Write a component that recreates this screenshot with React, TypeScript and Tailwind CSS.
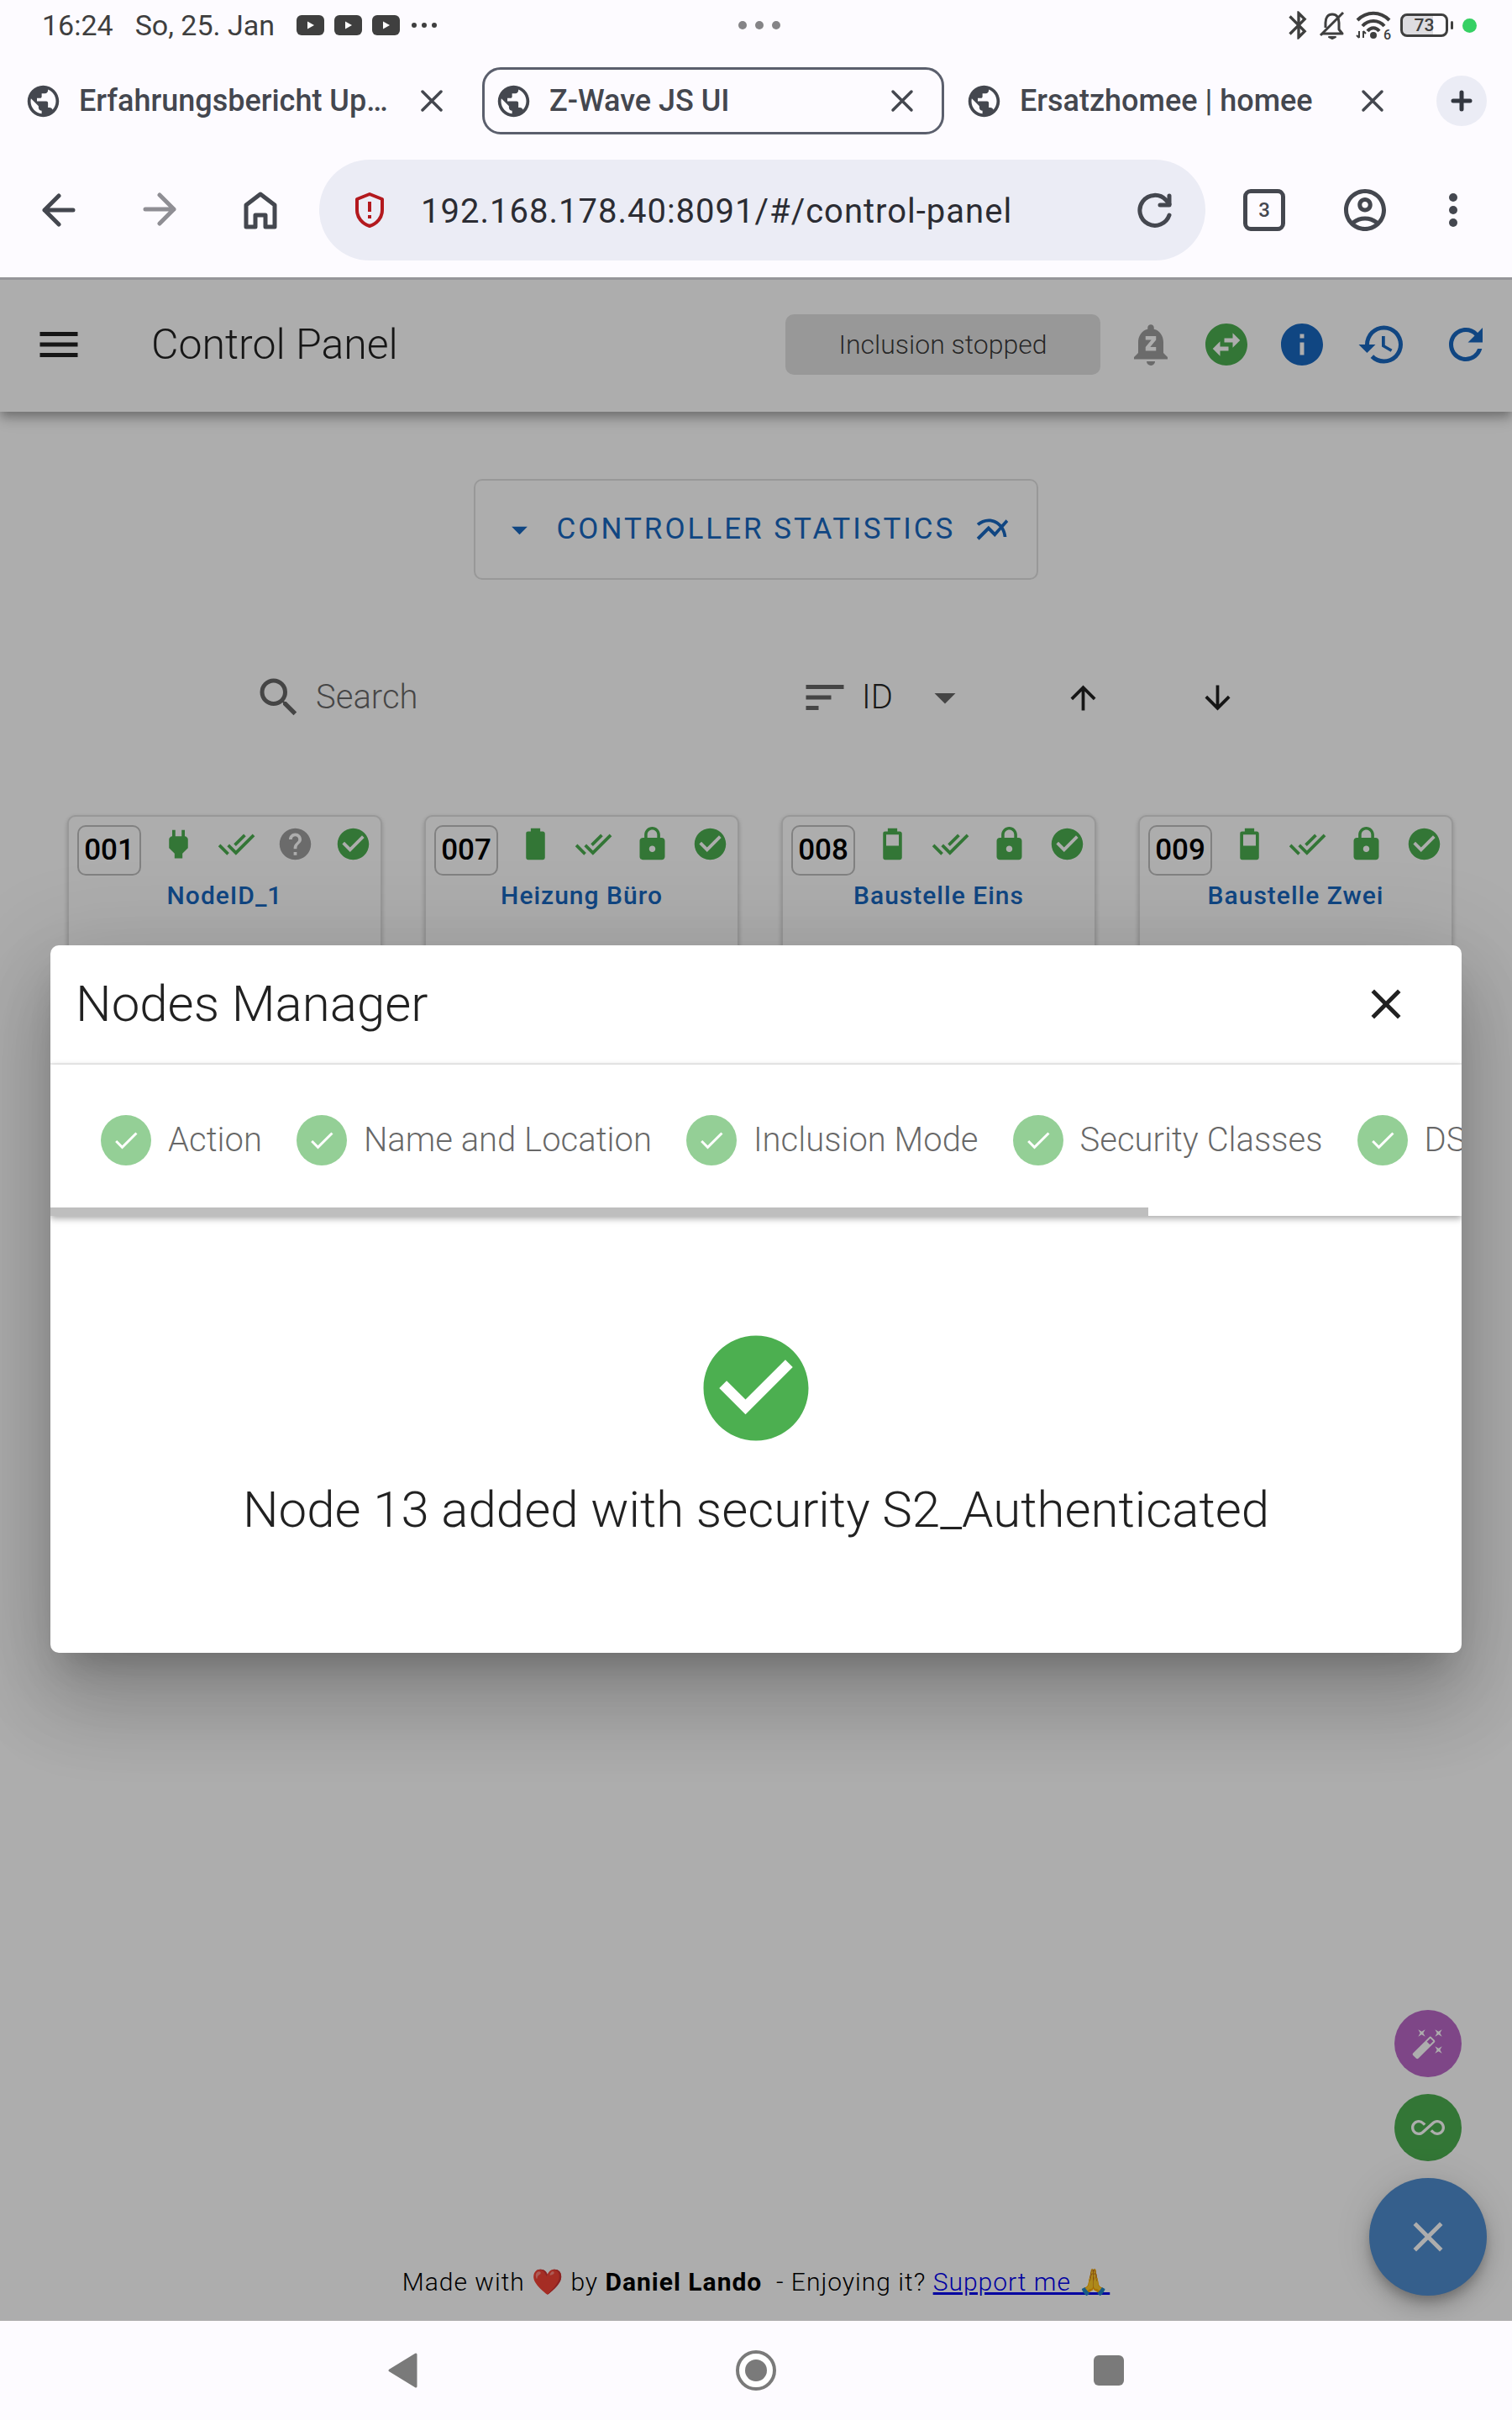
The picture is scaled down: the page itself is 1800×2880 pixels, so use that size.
import {
  MdAllInclusive,
  MdArrowDownward,
  MdArrowDropDown,
  MdArrowUpward,
  MdAutoFixHigh,
  MdBluetooth,
  MdCheck,
  MdCheckCircle,
  MdClose,
  MdDoneAll,
  MdHelp,
  MdHistory,
  MdInfo,
  MdLock,
  MdMenu,
  MdMultilineChart,
  MdNotificationsPaused,
  MdOutlineAccountCircle,
  MdPublic,
  MdRefresh,
  MdSearch,
  MdSort,
  MdSwapHorizontalCircle,
} from "react-icons/md";

type Power = "plug" | "full" | "half";

const powerPaths: Record<Power, string> = {
  plug: "M16,7V3H14V7H10V3H8V7H8C7,7 6,8 6,9V14.5L9.5,18V21H14.5V18L18,14.5V9C18,8 17,7 16,7Z",
  full: "M16.67,4H15V2H9V4H7.33A1.33,1.33 0 0,0 6,5.33V20.67C6,21.4 6.6,22 7.33,22H16.67A1.33,1.33 0 0,0 18,20.67V5.33C18,4.6 17.4,4 16.67,4Z",
  half: "M16,13H8V6H16M16.67,4H15V2H9V4H7.33A1.33,1.33 0 0,0 6,5.33V20.67C6,21.4 6.6,22 7.33,22H16.67A1.33,1.33 0 0,0 18,20.67V5.33C18,4.6 17.4,4 16.67,4Z",
};

const browserTabs = [
  { title: "Erfahrungsbericht Up…", active: false },
  { title: "Z-Wave JS UI", active: true },
  { title: "Ersatzhomee | homee", active: false },
];

const nodes: { id: string; name: string; power: Power; secure: boolean }[] = [
  { id: "001", name: "NodeID_1", power: "plug", secure: false },
  { id: "007", name: "Heizung Büro", power: "full", secure: true },
  { id: "008", name: "Baustelle Eins", power: "half", secure: true },
  { id: "009", name: "Baustelle Zwei", power: "half", secure: true },
];

const steps = [
  "Action",
  "Name and Location",
  "Inclusion Mode",
  "Security Classes",
  "DSK Validation",
];

function VideoBadge() {
  return (
    <svg width="33" height="24" viewBox="0 0 33 24">
      <rect width="33" height="24" rx="6" fill="#3f3f3f" />
      <path d="M13 7.5L21 12L13 16.5Z" fill="#fff" />
    </svg>
  );
}

function StatusBar() {
  return (
    <div className="grid h-[60px] grid-cols-3 items-center pr-[42px] pl-[50px] text-[#3f3f3f]">
      <div className="flex items-center gap-[26px] text-[34px] leading-10">
        <span>16:24</span>
        <span>So, 25. Jan</span>
        <div className="flex items-center gap-3">
          <VideoBadge />
          <VideoBadge />
          <VideoBadge />
          <svg width="34" height="6" viewBox="0 0 34 6" fill="currentColor">
            <circle cx="5" cy="3" r="3" />
            <circle cx="17" cy="3" r="3" />
            <circle cx="29" cy="3" r="3" />
          </svg>
        </div>
      </div>
      <svg
        width="52"
        height="12"
        viewBox="0 0 52 12"
        fill="#858487"
        className="justify-self-center"
      >
        <circle cx="6" cy="6" r="5" />
        <circle cx="26" cy="6" r="5" />
        <circle cx="46" cy="6" r="5" />
      </svg>
      <div className="flex items-center justify-end gap-[11px]">
        <MdBluetooth size={40} className="-mr-2" />
        <svg
          width="34"
          height="36"
          viewBox="0 0 34 36"
          fill="none"
          stroke="currentColor"
          strokeWidth="3"
          strokeLinejoin="round"
        >
          <path d="M5 28H29L25 23V15C25 9 22 5 17 5C12 5 9 9 9 15V21" />
          <path d="M30 3L3 30" />
          <path d="M13 32H21L17 34Z" fill="currentColor" strokeWidth="2" />
        </svg>
        <div className="relative">
          <svg
            width="42"
            height="34"
            viewBox="0 0 42 34"
            fill="none"
            stroke="currentColor"
            strokeWidth="4"
          >
            <path d="M2 11C13 0 29 0 40 11" />
            <path d="M8 18C15 10 27 10 34 18" />
            <path d="M14 24C18 19 24 19 28 24" />
            <circle cx="21" cy="29" r="2" fill="currentColor" />
            <path d="M4 24V32M9 24V32M1 29L4 32M12 27L9 24" strokeWidth="2" />
          </svg>
          <span className="absolute right-0 bottom-[-3px] text-[16px] leading-4 font-medium">
            6
          </span>
        </div>
        <div className="flex items-center gap-[3px]">
          <div className="flex h-7 w-[57px] items-center justify-center rounded-[8px] border-[3px] border-[#3f3f3f] bg-linear-to-r from-[#dddce0] from-70% to-transparent to-70% text-[21px] leading-6 font-medium">
            73
          </div>
          <div className="h-[10px] w-[3px] rounded-full bg-[#3f3f3f]" />
        </div>
        <div className="size-[17px] rounded-full bg-[#35d063]" />
      </div>
    </div>
  );
}

function TabStrip() {
  return (
    <div className="flex h-[120px] items-center gap-[10px] pr-[30px] pl-[14px] text-[#44474f]">
      {browserTabs.map((tab) => (
        <div
          key={tab.title}
          className={
            tab.active
              ? "flex h-20 max-w-[550px] flex-1 items-center rounded-[22px] border-[3px] border-[#5b5f6d] px-3"
              : "flex h-20 max-w-[550px] flex-1 items-center rounded-[22px] border-[3px] border-transparent px-3"
          }
        >
          <MdPublic size={45} className="shrink-0" />
          <span className="ml-5 flex-1 truncate text-[36px] leading-10 font-medium">
            {tab.title}
          </span>
          <button
            aria-label={`Close ${tab.title}`}
            className="mr-3 flex size-[46px] items-center justify-center"
          >
            <svg
              width="28"
              height="28"
              viewBox="0 0 28 28"
              stroke="currentColor"
              strokeWidth="3.5"
              strokeLinecap="round"
            >
              <path d="M3 3L25 25M25 3L3 25" />
            </svg>
          </button>
        </div>
      ))}
      <button
        aria-label="New tab"
        className="ml-auto flex size-[60px] items-center justify-center rounded-full bg-[#ebecf5]"
      >
        <svg
          width="28"
          height="28"
          viewBox="0 0 28 28"
          stroke="#333740"
          strokeWidth="5"
          strokeLinecap="round"
        >
          <path d="M14 4V24M4 14H24" />
        </svg>
      </button>
    </div>
  );
}

function AddressBar() {
  return (
    <div className="flex h-[150px] items-center pt-[10px] pr-[45px] pb-5 pl-10 text-[#44474f]">
      <div className="flex items-center gap-[60px]">
        <button aria-label="Back">
          <svg
            width="60"
            height="60"
            viewBox="0 0 60 60"
            fill="none"
            stroke="currentColor"
            strokeWidth="5"
            strokeLinecap="round"
            strokeLinejoin="round"
          >
            <path d="M47 30H13M30 13L13 30L30 47" />
          </svg>
        </button>
        <button aria-label="Forward" className="text-[#8f8e94]">
          <svg
            width="60"
            height="60"
            viewBox="0 0 60 60"
            fill="none"
            stroke="currentColor"
            strokeWidth="5"
            strokeLinecap="round"
            strokeLinejoin="round"
          >
            <path d="M13 29H47M30 12L47 29L30 46" />
          </svg>
        </button>
        <button aria-label="Home">
          <svg
            width="60"
            height="60"
            viewBox="0 0 60 60"
            fill="none"
            stroke="currentColor"
            strokeWidth="5"
            strokeLinejoin="round"
          >
            <path d="M13 24L30 11L47 24V50H36V36H24V50H13Z" />
          </svg>
        </button>
      </div>
      <div className="ml-10 flex h-[120px] flex-1 items-center rounded-full bg-[#ebecf5] px-[30px]">
        <svg
          width="60"
          height="60"
          viewBox="0 0 60 60"
          fill="none"
          stroke="#b3191e"
          strokeWidth="4"
          strokeLinejoin="round"
        >
          <path d="M30 11L45 17V30C45 39 39 46 30 49C21 46 15 39 15 30V17Z" />
          <path d="M30 20V32M30 36V40" />
        </svg>
        <input
          aria-label="Address"
          defaultValue="192.168.178.40:8091/#/control-panel"
          className="ml-[31px] min-w-0 flex-1 bg-transparent pt-1 text-[40px] leading-[48px] tracking-wide text-[#2b2c33] outline-none"
        />
        <button aria-label="Reload">
          <svg
            width="60"
            height="60"
            viewBox="0 0 60 60"
            fill="none"
            stroke="currentColor"
            strokeWidth="5"
            strokeLinecap="round"
            strokeLinejoin="round"
          >
            <path d="M47 36A18 18 0 1 1 43 18L47 23" />
            <path d="M47 13V24H36" />
          </svg>
        </button>
      </div>
      <button
        aria-label="3 open tabs"
        className="ml-[45px] flex size-[50px] items-center justify-center rounded-[9px] border-[5px] border-[#44474f] text-[24px] leading-7 font-medium"
      >
        3
      </button>
      <button aria-label="Account" className="ml-[65px]">
        <MdOutlineAccountCircle size={60} />
      </button>
      <button aria-label="Menu" className="ml-[50px]">
        <svg width="50" height="60" viewBox="0 0 50 60" fill="currentColor">
          <circle cx="25" cy="15" r="5" />
          <circle cx="25" cy="30" r="5" />
          <circle cx="25" cy="45" r="5" />
        </svg>
      </button>
    </div>
  );
}

function AppHeader() {
  return (
    <header className="flex h-[160px] items-center border-t-[3px] border-[#dcdce2] bg-white pr-[25px] pb-[3px] pl-10 shadow-[0_5px_10px_-2px_rgba(0,0,0,0.2),0_10px_12px_0_rgba(0,0,0,0.14),0_2px_25px_0_rgba(0,0,0,0.12)]">
      <button aria-label="Open navigation" className="text-black/87">
        <MdMenu size={60} />
      </button>
      <h1 className="ml-20 flex-1 text-[50px] leading-[60px] font-light text-black/87">
        Control Panel
      </h1>
      <div className="flex h-[72px] w-[375px] items-center justify-center rounded-[10px] bg-[#e0e0e0] text-[32px] leading-10 font-light text-black/75">
        Inclusion stopped
      </div>
      <div className="ml-[30px] flex gap-[30px] text-[#1867c0]">
        <button aria-label="Notifications" className="text-[#9e9e9e]">
          <MdNotificationsPaused size={60} />
        </button>
        <button aria-label="Connection" className="text-[#4caf50]">
          <MdSwapHorizontalCircle size={60} />
        </button>
        <button aria-label="Info">
          <MdInfo size={60} />
        </button>
      </div>
      <div className="ml-[35px] flex gap-10 text-[#1867c0]">
        <button aria-label="History">
          <MdHistory size={60} />
        </button>
        <button aria-label="Refresh">
          <MdRefresh size={60} />
        </button>
      </div>
    </header>
  );
}

function Toolbar() {
  return (
    <div className="mx-auto mt-[110px] flex h-[60px] w-2/3 items-center pr-7 pl-[2px]">
      <label className="flex flex-1 items-center text-black/60">
        <MdSearch size={60} />
        <input
          type="search"
          aria-label="Search"
          placeholder="Search"
          className="ml-[14px] w-[400px] bg-transparent text-[40px] leading-[48px] font-light outline-none placeholder:text-black/60"
        />
      </label>
      <div className="relative flex w-[203px] items-center text-black/60">
        <MdSort size={60} />
        <select
          aria-label="Sort by"
          className="ml-[14px] flex-1 appearance-none bg-transparent text-[40px] leading-[48px] font-light text-black/87"
        >
          <option>ID</option>
        </select>
        <MdArrowDropDown
          size={60}
          className="pointer-events-none absolute right-0"
        />
      </div>
      <button aria-label="Ascending" className="ml-28 text-black/87">
        <MdArrowUpward size={45} />
      </button>
      <button aria-label="Descending" className="ml-[115px] text-black/87">
        <MdArrowDownward size={45} />
      </button>
    </div>
  );
}

function NodeGrid() {
  return (
    <div className="mt-[110px] grid grid-cols-4 gap-[50px] pr-[70px] pl-20">
      {nodes.map((node) => (
        <article
          key={node.id}
          className="h-[400px] rounded-[10px] border-2 border-black/12 bg-white px-[10px] pt-[10px] shadow-[0_2px_5px_rgba(0,0,0,0.2)]"
        >
          <div className="flex items-start">
            <div className="flex h-[60px] w-[76px] items-center justify-center rounded-[10px] border-2 border-black/25 text-[35px] leading-10 font-medium text-black">
              {node.id}
            </div>
            <div className="flex flex-1 justify-between pl-[22px] text-[#4caf50]">
              <svg
                width="45"
                height="45"
                viewBox="0 0 24 24"
                fill="currentColor"
              >
                <path d={powerPaths[node.power]} />
              </svg>
              <MdDoneAll size={45} />
              {node.secure ? (
                <MdLock size={45} />
              ) : (
                <MdHelp size={45} className="text-[#9e9e9e]" />
              )}
              <MdCheckCircle size={45} />
            </div>
          </div>
          <h2 className="mt-1 text-center text-[30px] leading-10 font-medium tracking-[1px] text-[#1867c0]">
            {node.name}
          </h2>
        </article>
      ))}
    </div>
  );
}

function SpeedDial() {
  return (
    <div className="absolute right-[30px] bottom-[30px] flex flex-col items-center gap-5 text-white">
      <button
        aria-label="Manage nodes"
        className="flex size-20 items-center justify-center rounded-full bg-[#ba68c8]"
      >
        <MdAutoFixHigh size={40} />
      </button>
      <button
        aria-label="Advanced actions"
        className="flex size-20 items-center justify-center rounded-full bg-[#4caf50]"
      >
        <MdAllInclusive size={40} />
      </button>
      <button
        aria-label="Close menu"
        className="flex size-[140px] items-center justify-center rounded-full bg-[#4e8ccf] shadow-[0_8px_12px_-2px_rgba(0,0,0,0.2),0_15px_25px_0_rgba(0,0,0,0.14),0_2px_45px_0_rgba(0,0,0,0.12)]"
      >
        <MdClose size={60} />
      </button>
    </div>
  );
}

function NodesManagerDialog() {
  return (
    <div
      role="dialog"
      aria-labelledby="nodes-manager-title"
      className="w-full overflow-hidden rounded-[10px] bg-white text-black/87 shadow-[0_28px_38px_-18px_rgba(0,0,0,0.2),0_60px_95px_8px_rgba(0,0,0,0.14),0_22px_115px_20px_rgba(0,0,0,0.12)]"
    >
      <div className="flex h-[142px] items-center justify-between border-b-2 border-black/6 pr-[60px] pl-[30px]">
        <h2
          id="nodes-manager-title"
          className="text-[60px] leading-[72px] font-light"
        >
          Nodes Manager
        </h2>
        <button aria-label="Close">
          <MdClose size={60} />
        </button>
      </div>
      <div className="shadow-[0_3px_8px_rgba(0,0,0,0.35)]">
        <ol className="flex h-[170px] items-center gap-[41px] overflow-hidden px-[60px] pt-[10px]">
          {steps.map((step) => (
            <li key={step} className="flex shrink-0 items-center gap-5">
              <span className="flex size-[60px] items-center justify-center rounded-full bg-[#94cf96] text-white">
                <MdCheck size={36} />
              </span>
              <span className="text-[40px] leading-[48px] font-light text-black/60">
                {step}
              </span>
            </li>
          ))}
        </ol>
        <div className="h-[10px] w-7/9 bg-[#bebebe]" />
      </div>
      <div className="flex flex-col items-center pt-[130px] pb-[134px]">
        <MdCheckCircle size={150} className="text-[#4caf50]" />
        <p className="mt-[34px] text-[60px] leading-[72px] font-light">
          Node 13 added with security S2_Authenticated
        </p>
      </div>
    </div>
  );
}

function NavigationBar() {
  return (
    <nav className="flex h-[118px] items-center justify-center gap-[370px] text-[#7a7a7a]">
      <button aria-label="Back">
        <svg width="50" height="50" viewBox="0 0 50 50" fill="currentColor">
          <path
            d="M9 25L40 6V44Z"
            stroke="currentColor"
            strokeWidth="3"
            strokeLinejoin="round"
          />
        </svg>
      </button>
      <button aria-label="Home">
        <svg width="50" height="50" viewBox="0 0 50 50" fill="currentColor">
          <circle
            cx="25"
            cy="25"
            r="22"
            fill="#fff"
            stroke="currentColor"
            strokeWidth="4"
          />
          <circle cx="25" cy="25" r="13" />
        </svg>
      </button>
      <button aria-label="Recent apps">
        <svg width="50" height="50" viewBox="0 0 50 50" fill="currentColor">
          <rect x="7" y="7" width="36" height="36" rx="6" />
        </svg>
      </button>
    </nav>
  );
}

export default function App() {
  return (
    <div className="flex min-h-screen flex-col bg-[#fdfbff] font-[Roboto,'Liberation_Sans',sans-serif]">
      <StatusBar />
      <TabStrip />
      <AddressBar />

      <main className="relative flex flex-1 flex-col overflow-hidden bg-white">
        <AppHeader />
        <button className="mx-auto mt-20 flex h-[120px] items-center rounded-[10px] border-2 border-black/12 px-[30px] text-[35px] leading-10 tracking-[3px] text-[#1867c0]">
          <MdArrowDropDown size={45} />
          <span className="mx-[22px]">CONTROLLER STATISTICS</span>
          <MdMultilineChart size={45} />
        </button>
        <Toolbar />
        <NodeGrid />
        <footer className="mt-auto pb-[26px] text-center text-[30px] leading-10 font-light tracking-[1px] text-black">
          Made with ❤️ by <strong className="font-bold">Daniel Lando</strong>
          &nbsp; - Enjoying it?{" "}
          <a href="#support" className="text-[#0000ee] underline">
            Support me 🙏
          </a>
        </footer>
        <SpeedDial />

        {/* modal layer */}
        <div className="absolute inset-0 flex items-center justify-center bg-black/32 px-[60px]">
          <NodesManagerDialog />
        </div>
      </main>

      <NavigationBar />
    </div>
  );
}
